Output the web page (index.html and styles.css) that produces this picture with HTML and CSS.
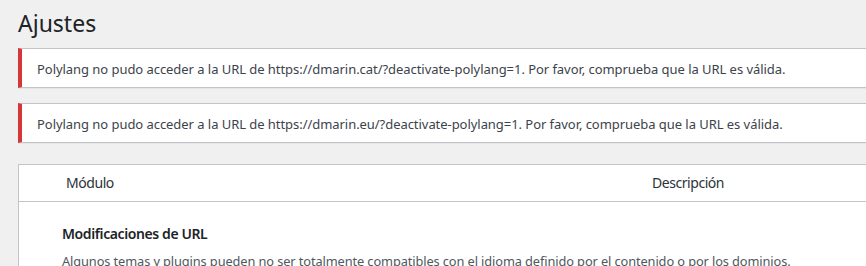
FILE: index.html
```html
<!DOCTYPE html>
<html lang="es">
<head>
  <meta charset="UTF-8">
  <meta name="viewport" content="width=device-width, initial-scale=1.0">
  <title>Ajustes</title>

  <link rel="stylesheet" href="styles.css">
</head>
<body>
  <div class="wrap">
    <h1 class="page-title">Ajustes</h1>

    <div class="notice notice-error">
      <p>Polylang no pudo acceder a la URL de https://dmarin.cat/?deactivate-polylang=1. Por favor, comprueba que la URL es válida.</p>
    </div>
    <div class="notice notice-error">
      <p>Polylang no pudo acceder a la URL de https://dmarin.eu/?deactivate-polylang=1. Por favor, comprueba que la URL es válida.</p>
    </div>

    <div class="modules">
      <div class="modules-head">
        <span class="col-name">Módulo</span>
        <span class="col-desc">Descripción</span>
      </div>
      <div class="module">
        <strong class="module-title">Modificaciones de URL</strong>
        <p class="module-desc">Algunos temas y plugins pueden no ser totalmente compatibles con el idioma definido por el contenido o por los dominios.</p>
      </div>
    </div>
  </div>
</body>
</html>
```

FILE: styles.css
```css
* {
  box-sizing: border-box;
  padding: 0;
  margin: 0;
}

html, body {
  background-color: #f0f0f1;
}

body {
  font-family: 'Noto Sans', 'Open Sans', sans-serif;
  font-size: 13px;
  line-height: 1.4;
  color: #3c434a;
  overflow: hidden;
}

.wrap {
  padding-left: 18px;
  margin-right: -200px;
}

.page-title {
  font-size: 23px;
  font-weight: 400;
  line-height: 1.3;
  color: #1d2327;
  padding: 9px 0 4px;
  margin-bottom: 5px;
}

.notice {
  background-color: #fff;
  border: 1px solid #c3c4c7;
  border-left: 4px solid #d63638;
  box-shadow: 0 1px 1px rgba(0, 0, 0, 0.04);
  padding: 1px 12px 1px 15px;
  margin-bottom: 15px;
  height: 40px;
}

.notice p {
  margin: 9px 0 7px;
  line-height: 20px;
  letter-spacing: -0.05px;
}

.modules {
  margin-top: 21px;
  background-color: #fff;
  border: 1px solid #c3c4c7;
}

.modules-head {
  display: flex;
  height: 37px;
  align-items: center;
  border-bottom: 1px solid #c3c4c7;
  color: #2c3338;
  font-size: 14px;
  letter-spacing: -0.45px;
}

.col-name {
  padding-left: 47px;
  width: 633px;
}

.module {
  padding: 22px 0 0 43px;
}

.module-title {
  display: block;
  font-size: 14px;
  font-weight: 600;
  color: #1d2327;
  letter-spacing: -0.4px;
}

.module-desc {
  margin-top: 10px;
  color: #50575e;
  font-size: 12.8px;
  letter-spacing: -0.1px;
}
```
